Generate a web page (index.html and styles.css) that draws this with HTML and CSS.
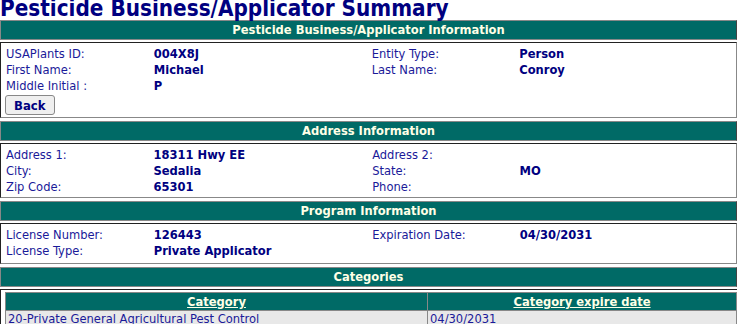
FILE: index.html
```html
<!DOCTYPE html>
<html lang="en">
<head>
    <meta charset="UTF-8">
    <title>Pesticide Business/Applicator Summary</title>
    <link rel="stylesheet" href="styles.css">
</head>
<body>
    <h1 class="page-title">Pesticide Business/Applicator Summary</h1>

    <div class="section-head">Pesticide Business/Applicator Information</div>
    <div class="section-body">
        <table class="info-table">
            <tr>
                <td class="lbl">USAPlants ID:</td><td class="val">004X8J</td>
                <td class="lbl">Entity Type:</td><td class="val">Person</td>
            </tr>
            <tr>
                <td class="lbl">First Name:</td><td class="val">Michael</td>
                <td class="lbl">Last Name:</td><td class="val">Conroy</td>
            </tr>
            <tr>
                <td class="lbl">Middle Initial :</td><td class="val">P</td>
                <td></td><td></td>
            </tr>
        </table>
        <button type="button" class="back-btn">Back</button>
    </div>

    <div class="section-head">Address Information</div>
    <div class="section-body">
        <table class="info-table">
            <tr>
                <td class="lbl">Address 1:</td><td class="val">18311 Hwy EE</td>
                <td class="lbl">Address 2:</td><td class="val"></td>
            </tr>
            <tr>
                <td class="lbl">City:</td><td class="val">Sedalia</td>
                <td class="lbl">State:</td><td class="val">MO</td>
            </tr>
            <tr>
                <td class="lbl">Zip Code:</td><td class="val">65301</td>
                <td class="lbl">Phone:</td><td class="val"></td>
            </tr>
        </table>
    </div>

    <div class="section-head">Program Information</div>
    <div class="section-body program">
        <table class="info-table">
            <tr>
                <td class="lbl">License Number:</td><td class="val">126443</td>
                <td class="lbl">Expiration Date:</td><td class="val">04/30/2031</td>
            </tr>
            <tr>
                <td class="lbl">License Type:</td><td class="val">Private Applicator</td>
                <td></td><td></td>
            </tr>
        </table>
    </div>

    <div class="section-head">Categories</div>
    <div class="section-body cats">
        <table class="cat-table">
            <tr>
                <th><a href="#">Category</a></th>
                <th><a href="#">Category expire date</a></th>
            </tr>
            <tr>
                <td>20-Private General Agricultural Pest Control</td>
                <td>04/30/2031</td>
            </tr>
        </table>
    </div>
</body>
</html>
```

FILE: styles.css
```css
body {
    margin: 0;
    font-family: "DejaVu Sans Condensed", "DejaVu Sans", Verdana, sans-serif;
    font-size: 12.8px;
    color: #1a1a99;
    background: #fff;
}

.page-title {
    margin: -3px 0 0 0;
    font-size: 22.3px;
    line-height: 23px;
    color: #000080;
}

.section-head {
    background: #006a66;
    color: #ffffe6;
    font-weight: bold;
    text-align: center;
    height: 18px;
    line-height: 18px;
    border-top: 1px solid #888;
    border-left: 1px solid #888;
    border-bottom: 1px solid #888;
    border-right: 1px solid #444;
}

.section-body {
    border: 1px solid #888;
    border-top-color: #222;
    border-left-color: #222;
    margin: 2px 0 3px 0;
    padding: 3px 2px 2px 2px;
}

.info-table {
    border-collapse: collapse;
}

.info-table td {
    padding: 0 3px;
    height: 16px;
    line-height: 16px;
    vertical-align: top;
    white-space: nowrap;
}

.info-table .lbl { width: 143px; }
.info-table .val { width: 215px; font-weight: bold; color: #000080; }

.program {
    padding-bottom: 4px;
}

.back-btn {
    font-family: inherit;
    font-size: 13px;
    font-weight: bold;
    color: #000080;
    background: #efefef;
    border: 1px solid #888;
    border-radius: 3px;
    padding: 0 8px;
    height: 20px;
    margin: 1px 0 0 2px;
}

.cats {
    padding: 2px 0 0 4px;
    border-right: none;
    border-bottom: none;
}

.cat-table {
    width: 100%;
    border-collapse: collapse;
}

.cat-table th {
    background: #006a66;
    height: 17px;
    line-height: 17px;
    padding: 0;
    border: 1px solid #888;
}

.cat-table th a {
    color: #ffffe6;
}

.cat-table td {
    background: #e8e8e8;
    border: 1px solid #888;
    padding: 0 2px;
    height: 16px;
    line-height: 16px;
}

.cat-table th:first-child,
.cat-table td:first-child {
    width: 417px;
}
```
